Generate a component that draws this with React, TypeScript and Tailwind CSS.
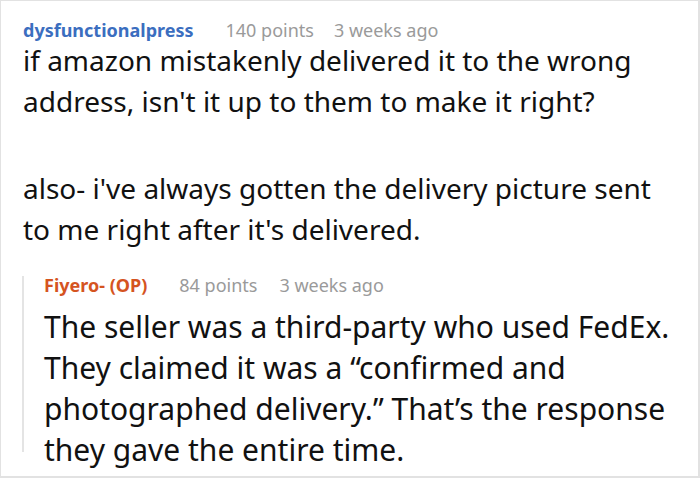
type Comment = {
  author: string;
  points: string;
  age: string;
  paragraphs: string[];
};

const parent: Comment = {
  author: "dysfunctionalpress",
  points: "140 points",
  age: "3 weeks ago",
  paragraphs: [
    "if amazon mistakenly delivered it to the wrong address, isn't it up to them to make it right?",
    "also- i've always gotten the delivery picture sent to me right after it's delivered.",
  ],
};

const reply: Comment = {
  author: "Fiyero- (OP)",
  points: "84 points",
  age: "3 weeks ago",
  paragraphs: [
    "The seller was a third-party who used FedEx. They claimed it was a \u201cconfirmed and photographed delivery.\u201d That\u2019s the response they gave the entire time.",
  ],
};

export default function App() {
  return (
    <div
      className="h-[478px] w-[700px] overflow-hidden border border-r-2 border-b-2 border-[#e2e2e2] bg-white"
      style={{ fontFamily: '"Noto Sans", "Open Sans", sans-serif' }}
    >
      <div className="pl-[22px] pt-[22px]">
        <div className="flex items-baseline text-[18px] leading-[14px]">
          <span className="font-bold text-[#3b6ebf]">{parent.author}</span>
          <span className="ml-[32px] text-[#9a9a9a]">{parent.points}</span>
          <span className="ml-[20px] text-[#9a9a9a]">{parent.age}</span>
        </div>
        <div className="mt-[3px] w-[645px] text-[28px] leading-[41px] text-[#111]">
          {parent.paragraphs.map((p, i) => (
            <p key={i} className={i > 0 ? "mt-[46px]" : ""}>
              {p}
            </p>
          ))}
        </div>
      </div>

      <div className="ml-[21px] mt-[34px] h-[176px] border-l-2 border-[#e4e4e4] pl-[20px]">
        <div className="-mt-[8px] flex items-baseline text-[18px] leading-[18px]">
          <span className="font-bold text-[#d5541f]">{reply.author}</span>
          <span className="ml-[32px] text-[#9a9a9a]">{reply.points}</span>
          <span className="ml-[22px] text-[#9a9a9a]">{reply.age}</span>
        </div>
        <div className="mt-[12px] w-[640px] text-[30px] leading-[41px] text-[#111]">
          {reply.paragraphs.map((p, i) => (
            <p key={i}>{p}</p>
          ))}
        </div>
      </div>
    </div>
  );
}
